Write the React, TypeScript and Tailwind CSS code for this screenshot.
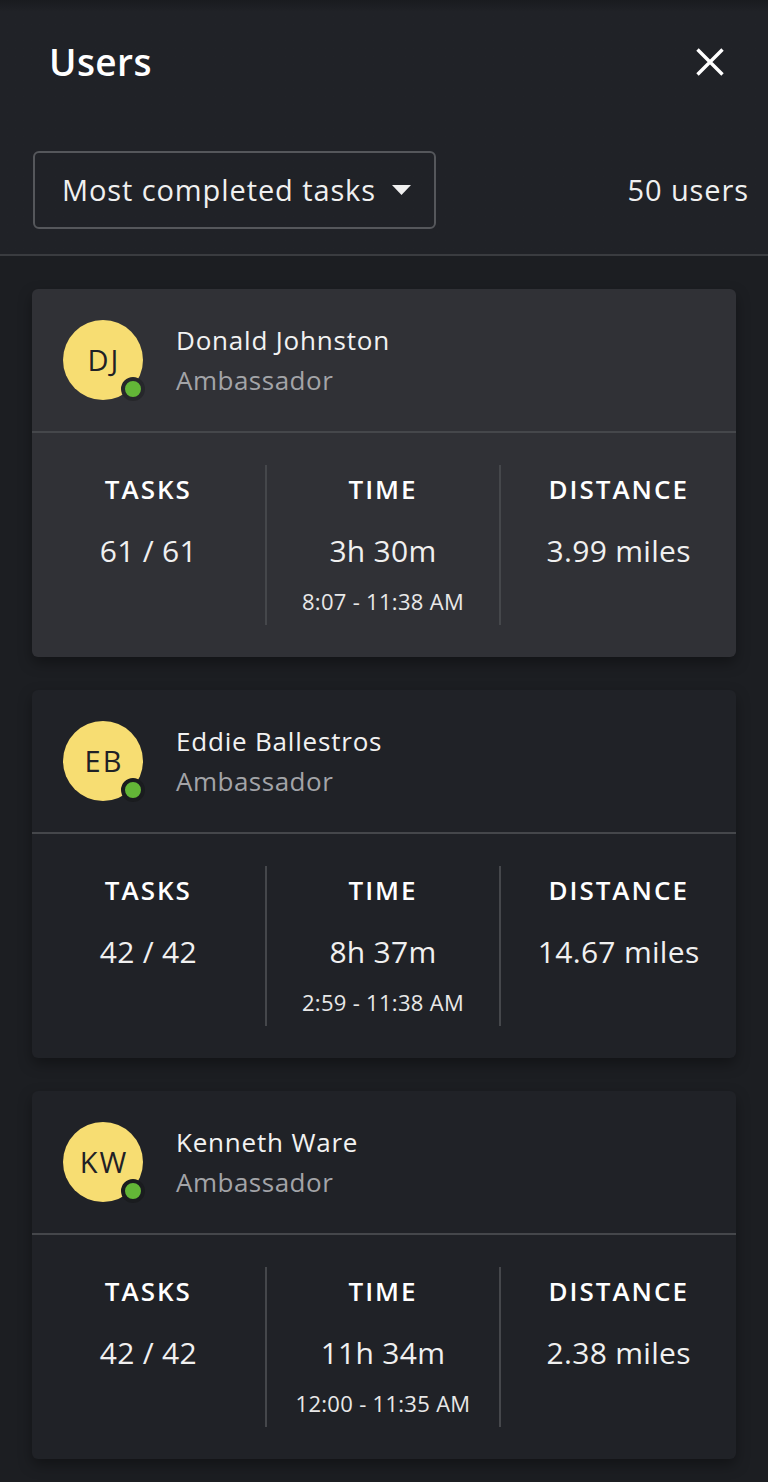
type User = {
  initials: string;
  name: string;
  role: string;
  tasks: string;
  time: string;
  range: string;
  distance: string;
  active?: boolean;
};

const users: User[] = [
  { initials: "DJ", name: "Donald Johnston", role: "Ambassador", tasks: "61 / 61", time: "3h 30m", range: "8:07 - 11:38 AM", distance: "3.99 miles", active: true },
  { initials: "EB", name: "Eddie Ballestros", role: "Ambassador", tasks: "42 / 42", time: "8h 37m", range: "2:59 - 11:38 AM", distance: "14.67 miles" },
  { initials: "KW", name: "Kenneth Ware", role: "Ambassador", tasks: "42 / 42", time: "11h 34m", range: "12:00 - 11:35 AM", distance: "2.38 miles" },
];

function Stat({ label, value, sub }: { label: string; value: string; sub?: string }) {
  return (
    <div className="flex flex-col items-center">
      <div className="text-[26px] font-semibold leading-[32px] tracking-[2px] text-white">{label}</div>
      <div className="mt-[28px] text-[30px] leading-[36px] tracking-[0.3px] text-[#f0f0f0]">{value}</div>
      {sub ? <div className="mt-[18px] text-[22px] leading-[28px] tracking-[0.3px] text-[#e8e8e8]">{sub}</div> : null}
    </div>
  );
}

function UserCard({ u }: { u: User }) {
  return (
    <article
      className={
        "rounded-md shadow-[0_6px_14px_rgba(0,0,0,0.35)] " +
        (u.active ? "bg-[#303136]" : "bg-[#202227]")
      }
    >
      <div className="flex h-[144px] items-center border-b-2 border-[#45474b] pl-[31px]">
        <div className="relative h-[80px] w-[80px] shrink-0">
          <div className="flex h-full w-full items-center justify-center rounded-full bg-[#f7dd72] pl-[2px] text-[29px] tracking-[2px] text-[#1f2126]">
            {u.initials}
          </div>
          <span
            className={
              "absolute left-[58px] top-[57px] h-[24px] w-[24px] rounded-full border-[4px] bg-[#63b637] " +
              (u.active ? "border-[#26272b]" : "border-[#1a1c1f]")
            }
          />
        </div>
        <div className="ml-[33px] flex flex-col">
          <div className="text-[26px] leading-[40px] tracking-[0.8px] text-[#f2f2f2]">{u.name}</div>
          <div className="text-[26px] leading-[40px] tracking-[0.5px] text-[#a3a4a8]">{u.role}</div>
        </div>
      </div>
      <div className="grid grid-cols-3 pt-[32px] pb-[32px]">
        <div className="flex h-[160px] justify-center border-r-2 border-[#45474b] pt-[8px]">
          <Stat label="TASKS" value={u.tasks} />
        </div>
        <div className="flex h-[160px] justify-center border-r-2 border-[#45474b] pt-[8px]">
          <Stat label="TIME" value={u.time} sub={u.range} />
        </div>
        <div className="flex h-[160px] justify-center pt-[8px]">
          <Stat label="DISTANCE" value={u.distance} />
        </div>
      </div>
    </article>
  );
}

export default function App() {
  return (
    <div className="min-h-[1482px] w-[768px] bg-[#1c1e22] font-['Open_Sans',sans-serif] text-white">
      <header className="bg-gradient-to-b from-[#191b1f] to-[#202227] to-[12px]">
        <div className="flex h-[124px] items-center justify-between pl-[49px] pr-[44px]">
          <h1 className="text-[37px] font-semibold tracking-[0.4px] text-white">Users</h1>
          <svg className="h-[28px] w-[28px]" viewBox="0 0 28 28" fill="none" stroke="white" strokeWidth="3.4">
            <path d="M1.5 1.5 L26.5 26.5 M26.5 1.5 L1.5 26.5" />
          </svg>
        </div>
        <div className="flex items-center justify-between border-b-2 border-[#3a3c40] pb-[25px] pl-[33px] pr-[19px] pt-[27px]">
          <button className="flex h-[78px] w-[403px] items-center rounded-md border-2 border-[#55575b] pl-[27px] text-[29px] tracking-[0.9px] text-[#f0f0f0]">
            Most completed tasks
            <svg className="ml-[16px] h-[10px] w-[19px]" viewBox="0 0 19 10">
              <path d="M0 0 L19 0 L9.5 10 Z" fill="#f0f0f0" />
            </svg>
          </button>
          <span className="text-[29px] tracking-[0.9px] text-[#f0f0f0]">50 users</span>
        </div>
      </header>
      <main className="flex flex-col gap-[33px] px-[32px] pt-[33px] pb-[20px]">
        {users.map((u) => (
          <UserCard key={u.name} u={u} />
        ))}
      </main>
    </div>
  );
}
